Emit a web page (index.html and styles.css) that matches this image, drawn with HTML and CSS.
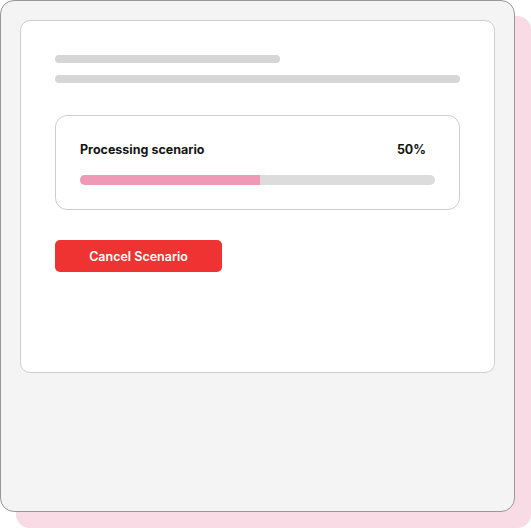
FILE: index.html
```html
<!DOCTYPE html>
<html lang="en">
<head>
    <meta charset="UTF-8">
    <meta name="viewport" content="width=device-width, initial-scale=1.0">
    <title>Scenario Progress</title>
    <link rel="stylesheet" href="styles.css">
</head>
<body>
    <div class="window">
        <div class="card">
            <div class="skeleton skeleton-short"></div>
            <div class="skeleton skeleton-long"></div>

            <div class="progress-box">
                <div class="progress-head">
                    <span class="progress-label">Processing scenario</span>
                    <span class="progress-value">50%</span>
                </div>
                <div class="progress-track">
                    <div class="progress-fill" style="width: 50.7%"></div>
                </div>
            </div>

            <button type="button" class="cancel-btn">Cancel Scenario</button>
        </div>
    </div>
</body>
</html>
```

FILE: styles.css
```css
body {
    margin: 0;
    padding: 0 16px 16px 0;
    width: 515px;
    height: 512px;
    background-color: #fff;
    font-family: Inter, "Open Sans", Arial, sans-serif;
}

/* grey window with the pink backdrop offset behind it */
.window {
    width: 515px;
    height: 512px;
    box-sizing: border-box;
    padding: 19px 19px 0 19px;
    background-color: #f4f4f4;
    border: 1px solid #9a9696;
    border-radius: 14px;
    box-shadow: 16px 16px 0 0 #f9dbe5;
}

.card {
    height: 353px;
    box-sizing: border-box;
    padding: 34px 34px 0 34px;
    background-color: #fff;
    border: 1px solid #cfcfcf;
    border-radius: 10px;
}

.skeleton {
    height: 8px;
    border-radius: 4px;
    background-color: #d6d6d6;
}

.skeleton-short {
    width: 225px;
}

.skeleton-long {
    width: 405px;
    margin-top: 12px;
}

.progress-box {
    width: 405px;
    height: 95px;
    box-sizing: border-box;
    margin-top: 32px;
    padding: 26px 24px 0 24px;
    border: 1px solid #cdcdcd;
    border-radius: 12px;
}

.progress-head {
    display: flex;
    justify-content: space-between;
    align-items: baseline;
    padding-right: 9px;
    font-size: 12.5px;
    font-weight: 700;
    color: #141414;
    line-height: 16px;
}

.progress-track {
    height: 10px;
    margin-top: 17px;
    border-radius: 5px;
    background-color: #dcdcdc;
    overflow: hidden;
}

.progress-fill {
    height: 100%;
    background-color: #ef99b6;
}

.cancel-btn {
    display: block;
    width: 167px;
    height: 32px;
    margin-top: 30px;
    padding: 0;
    border: none;
    border-radius: 5px;
    background-color: #ef3232;
    color: #fff;
    font-family: Inter, "Open Sans", Arial, sans-serif;
    font-size: 12.5px;
    font-weight: 600;
    cursor: pointer;
}
```
